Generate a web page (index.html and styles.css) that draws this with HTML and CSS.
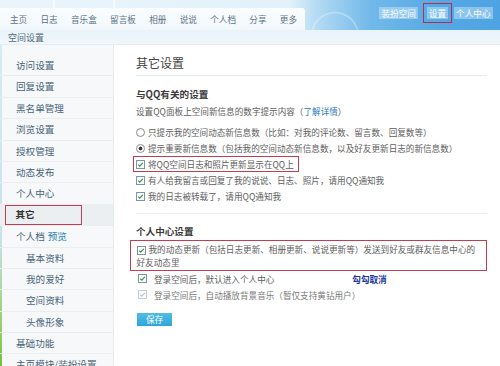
FILE: index.html
```html
<!DOCTYPE html>
<html lang="zh-CN">
<head>
<meta charset="utf-8">
<title>空间设置</title>
<link rel="stylesheet" href="styles.css">
</head>
<body>
<div class="top">
  <nav class="nav">
    <span>主页</span><span>日志</span><span>音乐盒</span><span>留言板</span><span>相册</span><span>说说</span><span>个人档</span><span>分享</span><span>更多</span>
  </nav>
  <div class="actions">
    <span class="btn">装扮空间</span>
    <span class="btn set">设置</span>
    <span class="btn">个人中心</span>
  </div>
</div>
<div class="subbar">空间设置</div>
<div class="layout">
  <aside class="side">
    <div class="item">访问设置</div>
    <div class="item">回复设置</div>
    <div class="item">黑名单管理</div>
    <div class="item">浏览设置</div>
    <div class="item">授权管理</div>
    <div class="item">动态发布</div>
    <div class="item">个人中心</div>
    <div class="item sel"><span class="hl">其它</span></div>
    <div class="item">个人档<span class="preview">预览</span></div>
    <div class="item sub">基本资料</div>
    <div class="item sub">我的爱好</div>
    <div class="item sub">空间资料</div>
    <div class="item sub">头像形象</div>
    <div class="item">基础功能</div>
    <div class="item">主页模块/装扮设置</div>
  </aside>
  <main class="main">
    <h1 class="title">其它设置</h1>
    <h2 class="sec">与QQ有关的设置</h2>
    <p class="desc">设置QQ面板上空间新信息的数字提示内容（<span class="link">了解详情</span>）</p>
    <div class="opts">
      <div class="row"><span class="rd"></span><span>只提示我的空间动态新信息数（比如：对我的评论数、留言数、回复数等）</span></div>
      <div class="row"><span class="rd on"></span><span>提示重要新信息数（包括我的空间动态新信息数，以及好友更新日志的新信息数）</span></div>
      <div class="row"><span class="boxed"><span class="cb"><svg viewBox="0 0 8 8"><path d="M1.4 4.1 L3.2 5.9 L6.7 2.1" fill="none" stroke="#2f9a3c" stroke-width="1.4"/></svg></span><span>将QQ空间日志和照片更新显示在QQ上</span></span></div>
      <div class="row"><span class="cb"><svg viewBox="0 0 8 8"><path d="M1.4 4.1 L3.2 5.9 L6.7 2.1" fill="none" stroke="#2f9a3c" stroke-width="1.4"/></svg></span><span>有人给我留言或回复了我的说说、日志、照片，请用QQ通知我</span></div>
      <div class="row"><span class="cb"><svg viewBox="0 0 8 8"><path d="M1.4 4.1 L3.2 5.9 L6.7 2.1" fill="none" stroke="#2f9a3c" stroke-width="1.4"/></svg></span><span>我的日志被转载了，请用QQ通知我</span></div>
    </div>
    <h2 class="sec sec2">个人中心设置</h2>
    <div class="bigbox"><span class="cb"><svg viewBox="0 0 8 8"><path d="M1.4 4.1 L3.2 5.9 L6.7 2.1" fill="none" stroke="#2f9a3c" stroke-width="1.4"/></svg></span>我的动态更新（包括日志更新、相册更新、说说更新等）发送到好友或群友信息中心的好友动态里</div>
    <div class="row ind"><span class="cb"><svg viewBox="0 0 8 8"><path d="M1.4 4.1 L3.2 5.9 L6.7 2.1" fill="none" stroke="#2f9a3c" stroke-width="1.4"/></svg></span><span>登录空间后，默认进入个人中心</span><span class="cancel">勾勾取消</span></div>
    <div class="row ind dis"><span class="cb off"><svg viewBox="0 0 8 8"><path d="M1.4 4.1 L3.2 5.9 L6.7 2.1" fill="none" stroke="#b9c2c8" stroke-width="1.3"/></svg></span><span>登录空间后，自动播放背景音乐（暂仅支持黄钻用户）</span></div>
    <div class="save">保存</div>
  </main>
</div>
</body>
</html>
```
FILE: styles.css
```css
* { box-sizing: border-box; margin: 0; padding: 0; }
body {
  width: 500px;
  height: 366px;
  overflow: hidden;
  font-family: "Noto Sans CJK SC", "Noto Sans", sans-serif;
  font-size: 8.6px;
  color: #5e5e5e;
  background: #fff;
}
.top {
  height: 30px;
  display: flex;
  justify-content: space-between;
  align-items: flex-start;
  background:
    radial-gradient(circle at 84px 4px, transparent 29px, rgba(255,255,255,.9) 30px, transparent 32px),
    radial-gradient(circle at 335px 36px, transparent 22px, rgba(255,255,255,.35) 23px, transparent 25px),
    linear-gradient(90deg, #eaf5fb 0, #e2f1fa 58%, #b6dcf4 63%, #72b9ea 74%, #55a8e4 88%, #4ea3e2 100%);
}
.nav {
  margin-top: 8px;
  height: 22px;
  width: 305px;
  display: flex;
  align-items: center;
  gap: 13.3px;
  padding-left: 10px;
  color: #5f7587;
  background: linear-gradient(#fbfdfe, #f1f8fc);
  border-radius: 0 3px 0 0;
}
.actions {
  display: flex;
  align-items: center;
  gap: 6px;
  margin: 7px 7px 0 0;
}
.btn {
  height: 12px;
  line-height: 12px;
  padding: 0 2.5px;
  color: #fff;
  background: rgba(210, 236, 250, .45);
}
.btn.set {
  margin-left: 3px;
  padding: 0 1.5px;
  outline: 1.5px solid #b3304d;
  outline-offset: 3px;
}
.subbar {
  height: 15px;
  line-height: 15px;
  padding-left: 8px;
  font-size: 9px;
  color: #55697a;
  background: linear-gradient(#e8f3fa, #f1f8fc);
  border-bottom: 1px solid #e4eef4;
}
.layout {
  display: flex;
  height: 321px;
}
.side {
  width: 114px;
  flex: none;
  padding-top: 10px;
  background:
    linear-gradient(#dbe9f1, #c9e2ea 60%, #8fca5a 92%, #72bf3e) left top / 2px 100% no-repeat,
    #f6f8f9;
  border-right: 1px solid #e5ebee;
}
.item {
  height: 21.4px;
  line-height: 21px;
  padding-left: 16px;
  font-size: 9.6px;
  color: #4a6579;
  border-bottom: 1px solid #e9eef1;
  white-space: nowrap;
}
.item.sub { padding-left: 26px; }
.preview { color: #2d86b5; margin-left: 3px; }
.item.sel {
  padding-left: 5px;
  background: #eceff1;
}
.hl {
  display: block;
  width: 77px;
  height: 20px;
  line-height: 17px;
  padding-left: 9.5px;
  border: 1.5px solid #c33c52;
  font-weight: bold;
  color: #333;
}
.main {
  flex: 1;
  padding: 10px 20px 0 22px;
}
.title {
  font-size: 12px;
  font-weight: normal;
  color: #444;
  line-height: 16px;
  padding-bottom: 4px;
  border-bottom: 1px solid #e4eaee;
}
.sec {
  margin-top: 11px;
  font-size: 9.6px;
  line-height: 14px;
  font-weight: bold;
  color: #3a3a3a;
}
.desc {
  margin-top: 3px;
  line-height: 14px;
}
.link { color: #2a7bbd; }
.opts {
  margin-top: 6px;
  padding-bottom: 9px;
  border-bottom: 1px solid #e8edf0;
}
.row {
  height: 16px;
  display: flex;
  align-items: center;
  gap: 2px;
  white-space: nowrap;
}
.boxed {
  display: flex;
  align-items: center;
  gap: 2px;
  height: 16px;
  margin-left: -3px;
  padding: 0 4px 0 2px;
  border: 1.5px solid #c33c52;
}
.rd {
  width: 9px;
  height: 9px;
  border: 1px solid #8c8c8c;
  border-radius: 50%;
  background: #fff;
  margin-right: 1px;
}
.rd.on {
  background: radial-gradient(circle, #3b3b3b 0 1.7px, #fff 2.2px);
}
.cb {
  width: 9px;
  height: 9px;
  flex: none;
  display: inline-flex;
  border: 1px solid #7d95a6;
  background: #fff;
  margin-right: 1px;
  vertical-align: -1px;
}
.cb svg { width: 7px; height: 7px; }
.cb.off { border-color: #c7ced3; }
.sec2 { margin-top: 10px; }
.bigbox {
  margin: 2px 0 0 -6px;
  width: 357px;
  padding: 1.5px 3px 0 5.5px;
  line-height: 13.5px;
  border: 1.5px solid #c33c52;
}
.bigbox .cb { margin-right: 3px; }
.ind { padding-left: 2px; }
.ind .cb { margin-right: 5px; }
.cancel {
  margin-left: 76px;
  color: #24399c;
  font-weight: bold;
}
.dis { color: #7a7a7a; }
.save {
  margin: 10px 0 0 1px;
  width: 35px;
  height: 13px;
  line-height: 13px;
  text-align: center;
  color: #fff;
  background: linear-gradient(#52bce4, #2fa6d9);
}
```
